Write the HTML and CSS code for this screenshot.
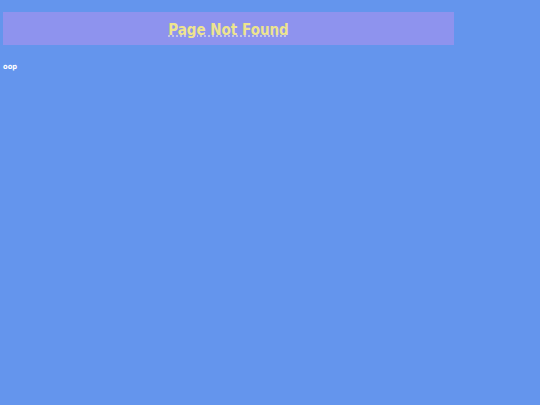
FILE: index.html
```html
<!DOCTYPE html>
<html>
<head>
<meta charset="utf-8">
<link rel="stylesheet" href="styles.css">
</head>
<body>
<div class="header"><abbr class="title" title="Page Not Found">Page Not Found</abbr></div>
<p class="note">oop</p>
</body>
</html>
```
FILE: styles.css
```css
html, body {
  margin: 0;
  padding: 0;
  background: #6495ed;
  font-family: "DejaVu Sans Condensed", "DejaVu Sans", sans-serif;
  font-stretch: condensed;
}
body {
  padding: 12px 3px 0;
}
.header {
  width: 451px;
  height: 33px;
  box-sizing: border-box;
  padding-top: 2px;
  background: #8e93ee;
  display: flex;
  align-items: center;
  justify-content: center;
}
.title {
  color: #ede48e;
  font-weight: bold;
  font-size: 15px;
  text-decoration: underline dotted;
  text-decoration-color: #d8d8e0;
}
.note {
  margin: 17px 0 0;
  color: #fff;
  font-weight: bold;
  font-size: 7.5px;
}
```
